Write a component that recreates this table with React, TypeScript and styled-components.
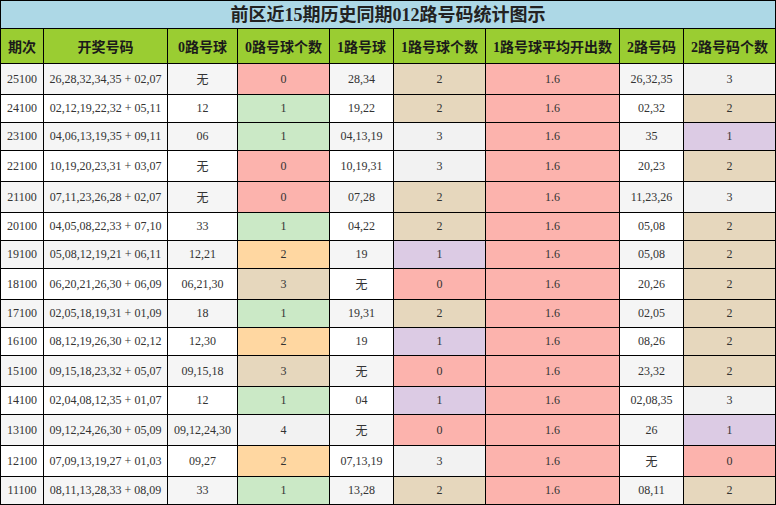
import React from "react";
import styled, { createGlobalStyle } from "styled-components";

const GlobalStyle = createGlobalStyle`
  html, body { margin: 0; padding: 0; background: #fff; }
  body { font-family: "Liberation Serif", "Noto Sans CJK SC", serif; }
`;

type Tone = "pink" | "green" | "orange" | "tan" | "lavender" | "grey" | "none";

const toneColor: Record<Tone, string | null> = {
  pink: "#fcb3ad",
  green: "#cbe9c6",
  orange: "#ffd7a1",
  tan: "#e6d7bd",
  lavender: "#dccbe4",
  grey: "#f2f2f2",
  none: null,
};

const COLS = [43, 124, 70, 92, 64, 92, 134, 64, 92];

const Sheet = styled.div<{ $rows: string }>`
  display: grid;
  width: 776px;
  box-sizing: border-box;
  grid-template-columns: ${COLS.map((w, i) => (i === 0 ? `${w + 1}px` : `${w}px`)).join(" ")};
  grid-template-rows: ${(p) => p.$rows};
  border-top: 1px solid #000;
`;

const Title = styled.div`
  grid-column: 1 / -1;
  background: #add8e6;
  border-left: 1px solid #000;
  border-right: 1px solid #000;
  border-bottom: 1px solid #000;
  display: flex;
  align-items: center;
  justify-content: center;
  font-size: 18px;
  font-weight: bold;
  color: #222;
  line-height: 1;
  box-sizing: border-box;
  width: 776px;
`;

const HeadCell = styled.div<{ $first?: boolean }>`
  background: #9acd32;
  border-right: 1px solid #000;
  border-bottom: 1px solid #000;
  ${(p) => (p.$first ? "border-left: 1px solid #000;" : "")}
  box-sizing: border-box;
  display: flex;
  align-items: center;
  justify-content: center;
  font-size: 14px;
  font-weight: bold;
  color: #1a1a1a;
  white-space: nowrap;
`;

const Cell = styled.div<{ $first?: boolean; $stripe: boolean; $tone: Tone }>`
  background: ${(p) => toneColor[p.$tone] ?? (p.$stripe ? "#f5f5f5" : "#ffffff")};
  border-right: 1px solid #000;
  border-bottom: 1px solid #000;
  ${(p) => (p.$first ? "border-left: 1px solid #000;" : "")}
  box-sizing: border-box;
  display: flex;
  align-items: center;
  justify-content: center;
  font-size: 12px;
  color: #333;
  white-space: nowrap;
`;

const headers = [
  "期次",
  "开奖号码",
  "0路号球",
  "0路号球个数",
  "1路号球",
  "1路号球个数",
  "1路号球平均开出数",
  "2路号码",
  "2路号码个数",
];

type Row = [string, string, string, number, string, number, string, string, number];

const data: Row[] = [
  ["25100", "26,28,32,34,35 + 02,07", "无", 0, "28,34", 2, "1.6", "26,32,35", 3],
  ["24100", "02,12,19,22,32 + 05,11", "12", 1, "19,22", 2, "1.6", "02,32", 2],
  ["23100", "04,06,13,19,35 + 09,11", "06", 1, "04,13,19", 3, "1.6", "35", 1],
  ["22100", "10,19,20,23,31 + 03,07", "无", 0, "10,19,31", 3, "1.6", "20,23", 2],
  ["21100", "07,11,23,26,28 + 02,07", "无", 0, "07,28", 2, "1.6", "11,23,26", 3],
  ["20100", "04,05,08,22,33 + 07,10", "33", 1, "04,22", 2, "1.6", "05,08", 2],
  ["19100", "05,08,12,19,21 + 06,11", "12,21", 2, "19", 1, "1.6", "05,08", 2],
  ["18100", "06,20,21,26,30 + 06,09", "06,21,30", 3, "无", 0, "1.6", "20,26", 2],
  ["17100", "02,05,18,19,31 + 01,09", "18", 1, "19,31", 2, "1.6", "02,05", 2],
  ["16100", "08,12,19,26,30 + 02,12", "12,30", 2, "19", 1, "1.6", "08,26", 2],
  ["15100", "09,15,18,23,32 + 05,07", "09,15,18", 3, "无", 0, "1.6", "23,32", 2],
  ["14100", "02,04,08,12,35 + 01,07", "12", 1, "04", 1, "1.6", "02,08,35", 3],
  ["13100", "09,12,24,26,30 + 05,09", "09,12,24,30", 4, "无", 0, "1.6", "26", 1],
  ["12100", "07,09,13,19,27 + 01,03", "09,27", 2, "07,13,19", 3, "1.6", "无", 0],
  ["11100", "08,11,13,28,33 + 08,09", "33", 1, "13,28", 2, "1.6", "08,11", 2],
];

const zeroTone: Tone[] = ["pink", "green", "orange", "tan", "grey"];
const otherTone: Tone[] = ["pink", "lavender", "tan", "grey"];

export default function App() {
  const rowHeights = [
    "28px",
    "35px",
    ...data.map((r) => (r.some((v) => v === "无") ? "31px" : "28px")),
  ].join(" ");

  return (
    <>
      <GlobalStyle />
      <Sheet $rows={rowHeights}>
        <Title>前区近15期历史同期012路号码统计图示</Title>
        {headers.map((h, i) => (
          <HeadCell key={h} $first={i === 0}>
            {h}
          </HeadCell>
        ))}
        {data.map((r, ri) => {
          const stripe = ri % 2 === 0;
          const tones: Tone[] = [
            "none",
            "none",
            "none",
            zeroTone[r[3]],
            "none",
            otherTone[r[5]],
            "pink",
            "none",
            otherTone[r[8]],
          ];
          return r.map((v, ci) => (
            <Cell key={`${ri}-${ci}`} $first={ci === 0} $stripe={stripe} $tone={tones[ci]}>
              {v}
            </Cell>
          ));
        })}
      </Sheet>
    </>
  );
}
